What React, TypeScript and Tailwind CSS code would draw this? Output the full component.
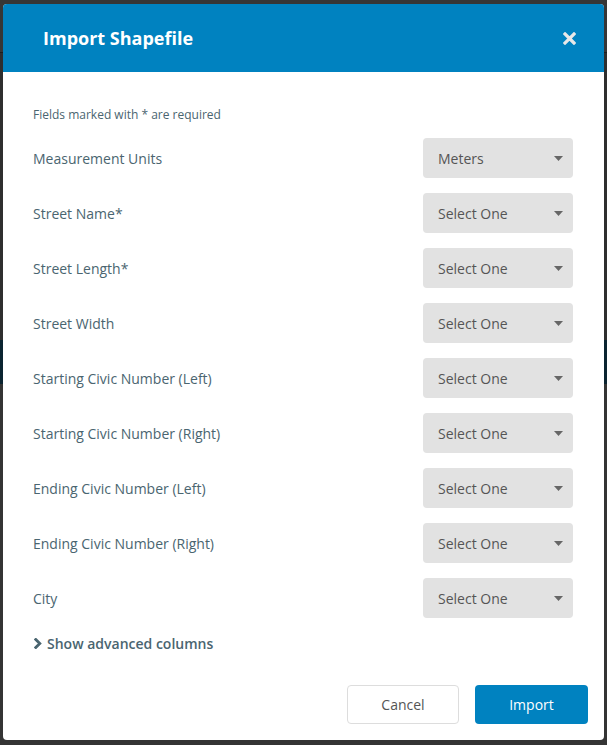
const FIELDS = [
  { label: "Measurement Units", value: "Meters" },
  { label: "Street Name*", value: "Select One" },
  { label: "Street Length*", value: "Select One" },
  { label: "Street Width", value: "Select One" },
  { label: "Starting Civic Number (Left)", value: "Select One" },
  { label: "Starting Civic Number (Right)", value: "Select One" },
  { label: "Ending Civic Number (Left)", value: "Select One" },
  { label: "Ending Civic Number (Right)", value: "Select One" },
  { label: "City", value: "Select One" },
];

function SelectBox({ value }: { value: string }) {
  return (
    <div className="flex h-10 w-[150px] items-center justify-between rounded-[4px] bg-[#e2e2e2] pl-[15px] pr-[10px] text-[14px] text-[#555]">
      <span>{value}</span>
      <svg width="9" height="5" viewBox="0 0 9 5" className="fill-[#666]">
        <path d="M0 0h9L4.5 5z" />
      </svg>
    </div>
  );
}

export default function App() {
  return (
    <div className="relative h-[745px] w-full overflow-hidden bg-[#343434] font-['Open_Sans',sans-serif]">
      <div className="flex flex-col">
        <div className="h-[52px] bg-[#363636]" />
        <div className="h-px bg-[#1e1e1e]" />
        <div className="h-[287px] bg-[#2e2e2e]" />
        <div className="h-[44px] bg-[#0b2431]" />
      </div>

      <div className="absolute left-[3px] right-[3px] top-[4px] flex h-[736px] flex-col overflow-hidden rounded-[4px] bg-white">
        <header className="flex h-[68px] shrink-0 items-center justify-between bg-[#0082c0] pl-[40px] pr-[28px]">
          <h1 className="text-[18px] font-bold text-white">Import Shapefile</h1>
          <svg width="13" height="13" viewBox="0 0 13 13" className="stroke-[#e8e8e8]" strokeWidth="3.2" strokeLinecap="square">
            <path d="M2 2l9 9M11 2l-9 9" />
          </svg>
        </header>

        <div className="flex flex-1 flex-col px-[30px]">
          <p className="mt-[34px] text-[12px] text-[#4a6570]">Fields marked with * are required</p>

          <div className="mt-[14px] flex flex-col gap-[15px]">
            {FIELDS.map((field) => (
              <div key={field.label} className="flex items-center justify-between pr-px">
                <span className="text-[14px] text-[#4a6570]">{field.label}</span>
                <SelectBox value={field.value} />
              </div>
            ))}
          </div>

          <button className="mt-[15px] flex items-center gap-[5px] self-start text-[14px] font-semibold text-[#4a6570]">
            <svg width="8" height="11" viewBox="0 0 8 11" className="ml-px stroke-[#4a6570]" fill="none" strokeWidth="2.8" strokeLinecap="square">
              <path d="M1.8 1.5l4 4-4 4" />
            </svg>
            Show advanced columns
          </button>

          <div className="-mr-[14px] mt-[31px] flex justify-end gap-[16px]">
            <button className="h-[39px] w-[112px] rounded-[4px] border border-[#ddd] bg-white text-[14px] text-[#555]">Cancel</button>
            <button className="h-[39px] w-[113px] rounded-[4px] bg-[#0082c0] text-[14px] text-white">Import</button>
          </div>
        </div>
      </div>
    </div>
  );
}
